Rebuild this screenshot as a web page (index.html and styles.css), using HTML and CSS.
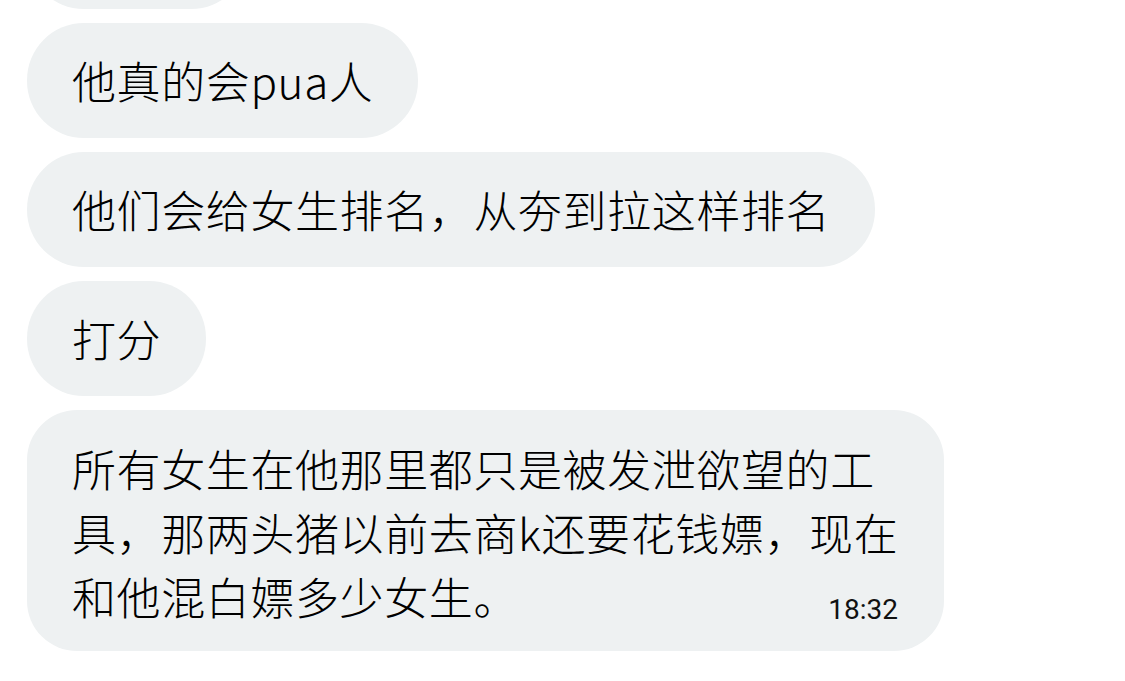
FILE: index.html
```html
<!DOCTYPE html>
<html lang="zh-CN">
<head>
    <meta charset="UTF-8">
    <meta name="viewport" content="width=device-width, initial-scale=1.0">
    <title>Chat</title>
    <link rel="stylesheet" href="styles.css">
</head>
<body>
    <div class="chat">
        <div class="bubble bubble-cut">&nbsp;</div>
        <div class="bubble">他真的会pua人</div>
        <div class="bubble">他们会给女生排名，从夯到拉这样排名</div>
        <div class="bubble">打分</div>
        <div class="bubble bubble-long">
            <p class="text">所有女生在他那里都只是被发泄欲望的工具，那两头猪以前去商k还要花钱嫖，现在和他混白嫖多少女生。<span class="time">18:32</span></p>
        </div>
    </div>
</body>
</html>
```

FILE: styles.css
```css
* {
    margin: 0;
    padding: 0;
    box-sizing: border-box;
}

body {
    background: #ffffff;
    color: #000000;
    font-family: "Noto Sans CJK SC", "Noto Sans", sans-serif;
    overflow: hidden;
}

.chat {
    display: flex;
    flex-direction: column;
    align-items: flex-start;
    gap: 14px;
    padding-left: 27px;
}

.bubble {
    background: #eef1f2;
    border-radius: 57px;
    padding: 25px 45px 26px 45px;
    font-size: 44px;
    font-weight: 300;
    line-height: 64px;
    letter-spacing: 0.6px;
    max-width: 917px;
}

.bubble-cut {
    width: 221px;
    margin-top: -106px;
}

.bubble-long {
    border-radius: 50px;
    padding: 26px 40px 23px 45px;
}

.time {
    float: right;
    margin-top: 30px;
    margin-right: 6px;
    font-family: Roboto, "Liberation Sans", sans-serif;
    font-size: 28px;
    font-weight: 400;
    line-height: 32px;
    letter-spacing: 0;
    color: #111111;
}
```
